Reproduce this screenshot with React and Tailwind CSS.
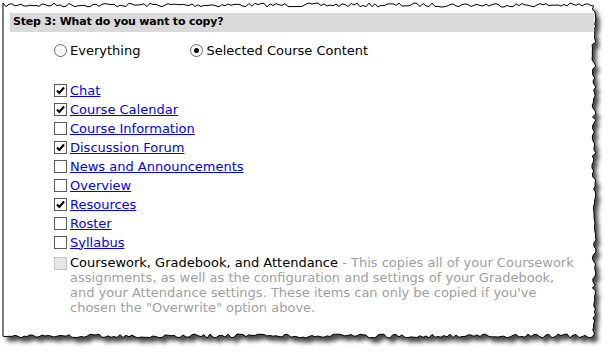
import React from 'react'

// torn paper edge, deterministic jitter
function makeRand(seed) {
  let s = seed
  return () => {
    s = (s * 16807) % 2147483647
    return (s - 1) / 2147483646
  }
}

function tornPath() {
  const r = makeRand(7)
  const pts = []
  for (let x = 3; x <= 592; x += 3) pts.push([x, 3 + r() * 4])
  for (let y = 6; y <= 334; y += 3) pts.push([592 + r() * 4, y])
  for (let x = 594; x >= 3; x -= 3) pts.push([x, 334 + r() * 4])
  return 'M' + pts.map(p => p[0].toFixed(1) + ' ' + p[1].toFixed(1)).join(' L') + ' Z'
}

const items = [
  { label: 'Chat', checked: true },
  { label: 'Course Calendar', checked: true },
  { label: 'Course Information', checked: false },
  { label: 'Discussion Forum', checked: true },
  { label: 'News and Announcements', checked: false },
  { label: 'Overview', checked: false },
  { label: 'Resources', checked: true },
  { label: 'Roster', checked: false },
  { label: 'Syllabus', checked: false },
]

function Check({ checked, disabled }) {
  return (
    <span
      className={`w-[13px] h-[13px] shrink-0 border flex items-center justify-center ${
        disabled ? 'bg-[#e6e6e6] border-[#c4c4c4]' : 'bg-white border-[#5a5a5a]'
      }`}
    >
      {checked && (
        <svg width="9" height="9" viewBox="0 0 9 9">
          <path d="M1 4.5 L3.3 7 L8 1.5" fill="none" stroke="#000" strokeWidth="2" />
        </svg>
      )}
    </span>
  )
}

function Radio({ selected, label }) {
  return (
    <label className="flex items-center gap-[3px]">
      <span className="w-[13px] h-[13px] rounded-full border border-[#6a6a6a] bg-white flex items-center justify-center">
        {selected && <span className="w-[5px] h-[5px] rounded-full bg-black" />}
      </span>
      <span>{label}</span>
    </label>
  )
}

export default function App() {
  const d = tornPath()
  return (
    <div className="relative w-[616px] h-[356px] bg-white overflow-hidden text-black font-['DejaVu_Sans',Verdana,sans-serif]">
      {/* paper + shadow */}
      <svg className="absolute inset-0 pointer-events-none" width="616" height="356">
        <defs>
          <filter id="blur" x="-5%" y="-5%" width="110%" height="110%">
            <feGaussianBlur stdDeviation="2" />
          </filter>
        </defs>
        <path d={d} fill="#4a4a4a" transform="translate(4 5)" filter="url(#blur)" />
        <path d={d} fill="#fff" stroke="#000" strokeWidth="1" />
      </svg>

      <div className="relative pt-[13px] pl-[10px] pr-[22px]">
        {/* Header */}
        <div className="h-[19px] bg-[#d9d9d9] flex items-center pl-[3px] text-[11px] font-bold tracking-[-0.2px]">
          Step 3: What do you want to copy?
        </div>

        {/* Radios */}
        <div className="flex items-center gap-[50px] pl-[44px] mt-[9px] text-[13px]">
          <Radio label="Everything" />
          <Radio selected label="Selected Course Content" />
        </div>

        {/* Checkbox list */}
        <div className="pl-[44px] mt-[20px] text-[13px]">
          {items.map(it => (
            <div key={it.label} className="h-[19px] flex items-center gap-[3px]">
              <Check checked={it.checked} />
              <a href="#" className="text-[#0000ff] underline leading-none">{it.label}</a>
            </div>
          ))}
          <div className="flex items-start gap-[3px] mt-[3px]">
            <span className="mt-[2px]"><Check disabled /></span>
            <p className="leading-[15px] text-[#a0a0a0]">
              <span className="text-black">Coursework, Gradebook, and Attendance</span> - This copies all of your Coursework<br />
              assignments, as well as the configuration and settings of your Gradebook,<br />
              and your Attendance settings. These items can only be copied if you've<br />
              chosen the "Overwrite" option above.
            </p>
          </div>
        </div>
      </div>
    </div>
  )
}
